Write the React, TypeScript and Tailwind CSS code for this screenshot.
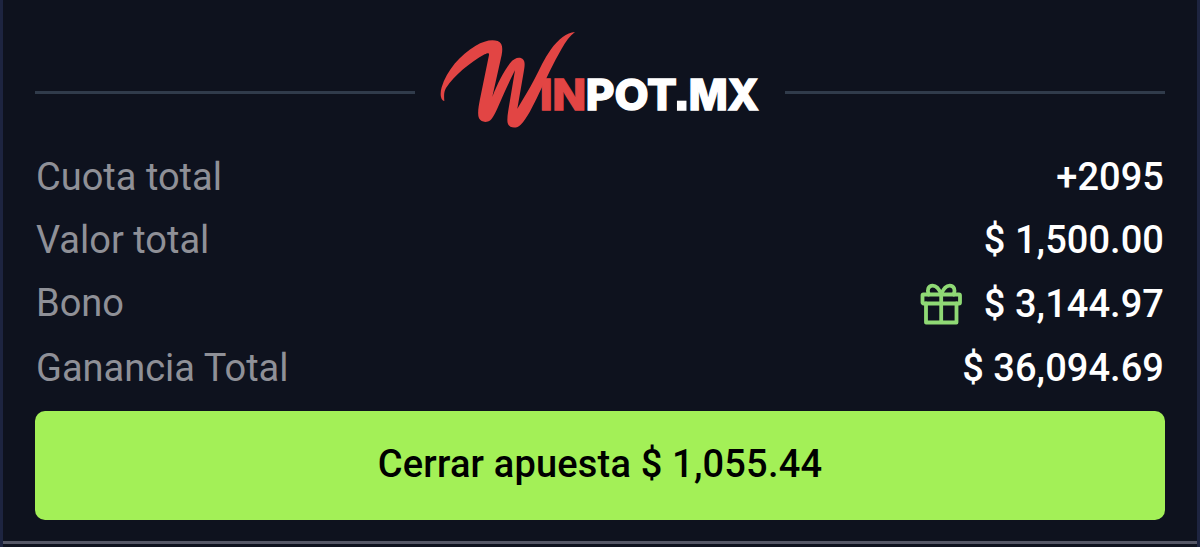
import type { ReactNode } from "react";

function Logo() {
  return (
    <svg viewBox="0 0 1020 360" className="h-[120px] w-[340px] shrink-0" role="img" aria-label="Winpot.mx">
      {/* Brush swash */}
      <path
        fill="#e24544"
        d="M43 243C32 241 29 222 35 202C50 151 91 104 137 77C162 62 186 57 203 63C217 68 219 83 215 105L187 230C204 188 221 155 240 130C253 113 270 109 280 119C286 126 284 139 281 157L262 266C282 233 298 207 312 180C330 145 343 115 362 89C386 57 410 37 435 36C419 48 408 64 395 86C370 128 350 174 328 218C308 260 291 295 272 314C260 327 237 325 233 309C230 295 235 272 239 247L255 151C242 176 226 211 211 245C200 270 191 291 181 301C170 309 153 307 147 295C142 283 145 262 150 237L177 105C178 98 173 98 164 103C119 128 75 165 48 204C41 216 42 229 43 243Z"
      />
      <g className="font-[Inter,sans-serif] font-extrabold" fontSize="126" strokeWidth="4">
        <text x="330" y="269" fill="#e24544" stroke="#e24544" textLength="138" lengthAdjust="spacingAndGlyphs">
          IN
        </text>
        <g fill="#ffffff" stroke="#ffffff">
          <text x="467" y="269" textLength="274" lengthAdjust="spacingAndGlyphs">
            POT
          </text>
          <text x="731" y="269" fontSize="172" className="font-['Liberation_Sans',sans-serif] font-bold">
            .
          </text>
          <text x="776" y="269" textLength="211" lengthAdjust="spacingAndGlyphs">
            MX
          </text>
        </g>
      </g>
    </svg>
  );
}

function GiftIcon() {
  return (
    <svg
      viewBox="0 0 42 42"
      className="h-[42px] w-[42px]"
      fill="none"
      stroke="#8fd975"
      strokeWidth="3.8"
      strokeLinejoin="round"
      strokeLinecap="round"
    >
      <rect x="2.5" y="11.5" width="37.5" height="9" rx="1" />
      <path d="M6 20.5V39.5H36.5V20.5M21.2 11.5V39.5" />
      <path d="M21.2 11.5C19 5.5 16 2.7 12.7 2.7C8.2 2.7 6.7 7 8.7 11.5M21.2 11.5C23.4 5.5 26.4 2.7 29.7 2.7C34.2 2.7 35.7 7 33.7 11.5" />
    </svg>
  );
}

function Row({ label, value, icon }: { label: string; value: string; icon?: ReactNode }) {
  return (
    <div className="flex h-[63.6px] items-center justify-between pr-px pl-px">
      <span className={icon ? "pb-0.5 text-[#8f9097]" : "text-[#8f9097]"}>{label}</span>
      <div className="flex items-center gap-[22px]">
        {icon}
        <span className="font-medium tracking-[0.05px] text-white">{value}</span>
      </div>
    </div>
  );
}

export default function App() {
  return (
    <main className="flex h-[547px] w-[1200px] flex-col overflow-hidden border-x-3 border-[#1d2440] bg-[#0e121e] font-[Roboto,sans-serif] text-[38px] leading-none">
      <div className="flex flex-1 flex-col border-b-3 border-[#555766] px-8 pt-5">
        <header className="flex h-[125px] items-start gap-[15px]">
          <div className="mt-[71px] h-[3px] flex-1 bg-[#303b4b]" />
          <Logo />
          <div className="mt-[71px] h-[3px] flex-1 bg-[#303b4b]" />
        </header>

        <Row label="Cuota total" value="+2095" />
        <Row label="Valor total" value="$ 1,500.00" />
        <Row label="Bono" value="$ 3,144.97" icon={<GiftIcon />} />
        <Row label="Ganancia Total" value="$ 36,094.69" />

        <button className="mt-[11.6px] h-[109px] w-full shrink-0 rounded-[10px] bg-[#a3f057] pb-[3px] font-medium tracking-[0.18px] text-black">
          Cerrar apuesta $ 1,055.44
        </button>
      </div>
      <div className="h-[3px] shrink-0" />
    </main>
  );
}
